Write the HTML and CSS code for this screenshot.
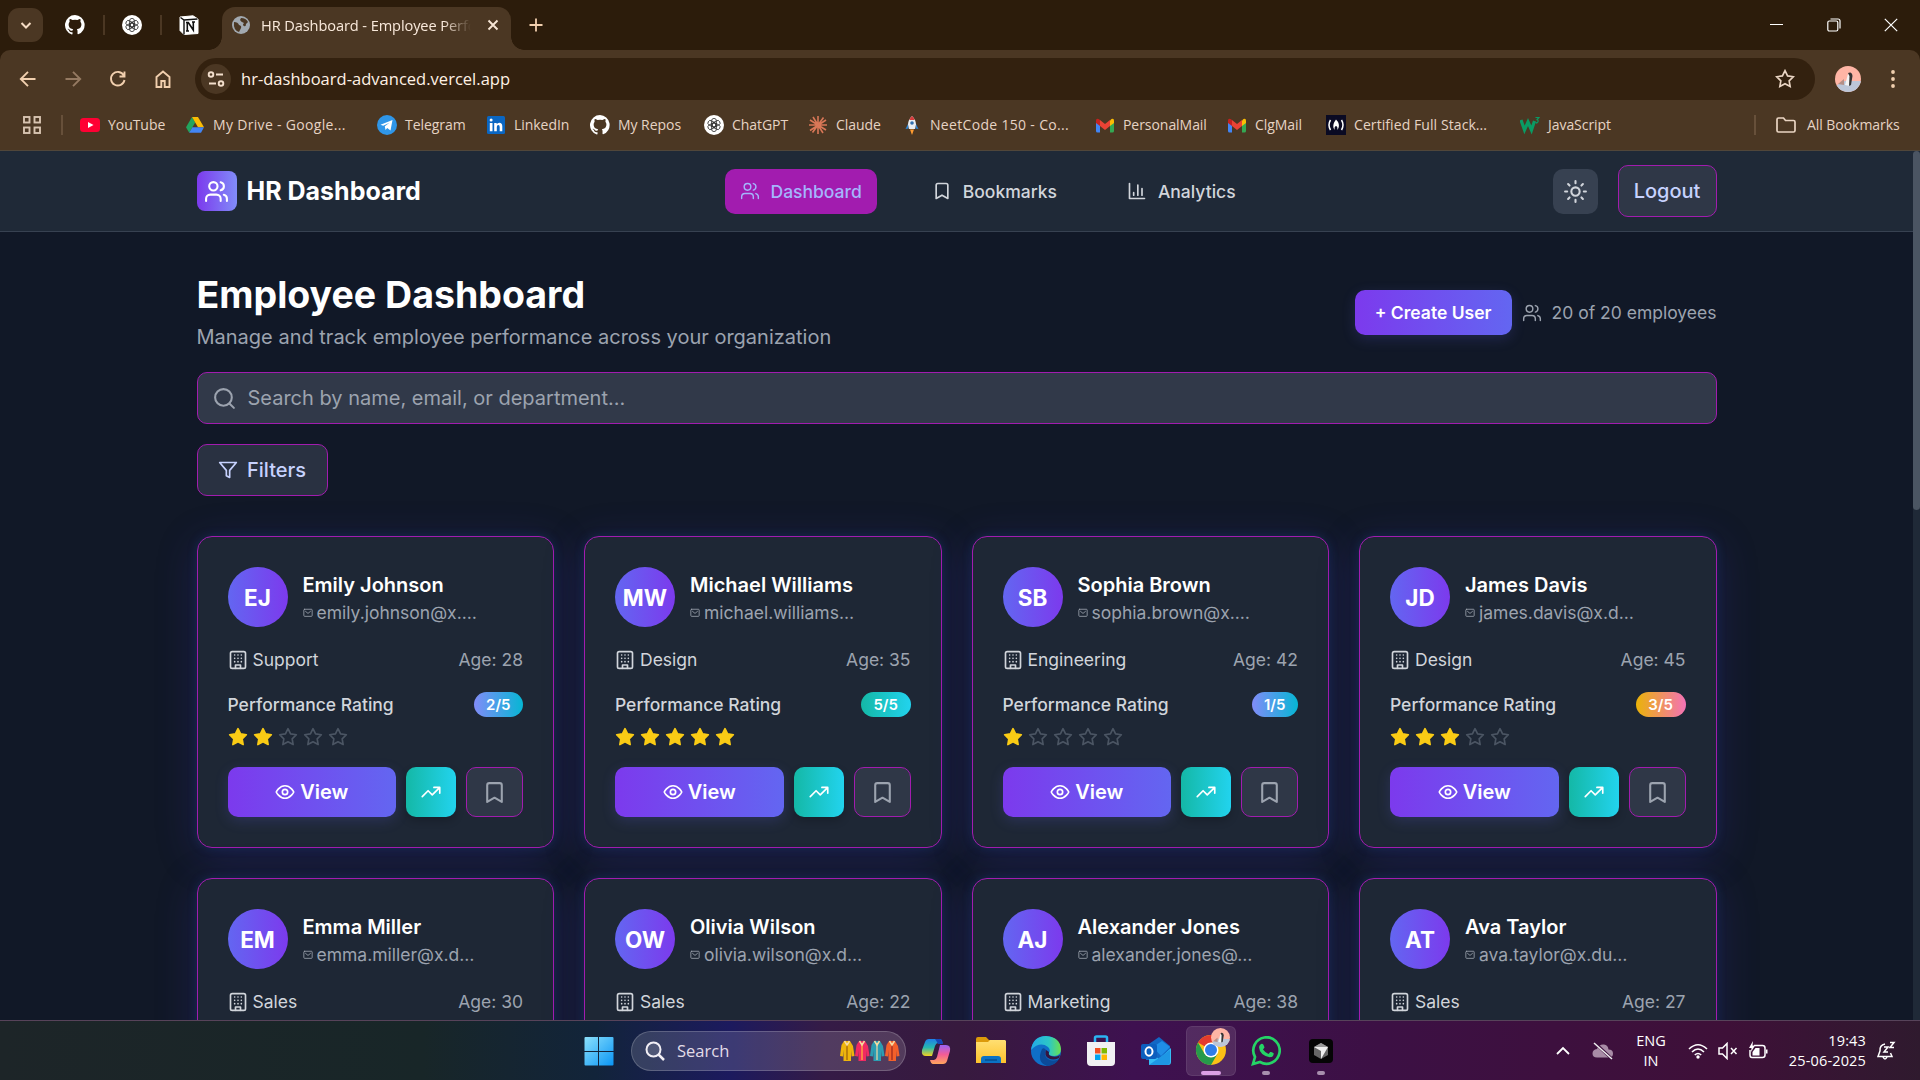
FILE: index.html
```html
<!DOCTYPE html>
<html lang="en">
<head>
<meta charset="utf-8">
<title>HR Dashboard - Employee Performance</title>
<link rel="stylesheet" href="styles.css">
</head>
<body>
<svg class="sprite" aria-hidden="true">
  <symbol id="users" viewBox="0 0 24 24"><path d="M16 21v-2a4 4 0 0 0-4-4H6a4 4 0 0 0-4 4v2M16 3.1a4 4 0 0 1 0 7.8M22 21v-2a4 4 0 0 0-3-3.9"/><circle cx="9" cy="7" r="4"/></symbol>
  <symbol id="bookmark" viewBox="0 0 24 24"><path d="m19 21-7-4-7 4V5a2 2 0 0 1 2-2h10a2 2 0 0 1 2 2z"/></symbol>
  <symbol id="chart" viewBox="0 0 24 24"><path d="M3 3v18h18M18 17V9M13 17V5M8 17v-3"/></symbol>
  <symbol id="sun" viewBox="0 0 24 24"><circle cx="12" cy="12" r="4"/><path d="M12 2v2M12 20v2M4.9 4.9l1.4 1.4M17.7 17.7l1.4 1.4M2 12h2M20 12h2M6.3 17.7l-1.4 1.4M19.1 4.9l-1.4 1.4"/></symbol>
  <symbol id="search" viewBox="0 0 24 24"><circle cx="11" cy="11" r="8"/><path d="m21 21-4.3-4.3"/></symbol>
  <symbol id="filter" viewBox="0 0 24 24"><path d="M22 3H2l8 9.46V19l4 2v-8.54z"/></symbol>
  <symbol id="mail" viewBox="0 0 24 24"><rect x="2" y="3" width="20" height="17" rx="2"/><path d="m6 8 6 5 6-5"/></symbol>
  <symbol id="building" viewBox="0 0 24 24"><rect x="3" y="2" width="18" height="20" rx="2"/><path d="M9 22v-4h6v4M8 6h.01M16 6h.01M12 6h.01M12 10h.01M12 14h.01M16 10h.01M16 14h.01M8 10h.01M8 14h.01"/></symbol>
  <symbol id="star" viewBox="0 0 24 24"><path d="m12 2 3.09 6.26L22 9.27l-5 4.87 1.18 6.88L12 17.77l-6.18 3.25L7 14.14 2 9.27l6.91-1.01z"/></symbol>
  <symbol id="eye" viewBox="0 0 24 24"><path d="M1.5 12S5 4.5 12 4.5 22.5 12 22.5 12 19 19.5 12 19.5 1.5 12 1.5 12z"/><circle cx="12" cy="12" r="3.2"/></symbol>
  <symbol id="trend" viewBox="0 0 24 24"><path d="m22 7-8.500 8.500-5-5L1.500 17.500M15.500 6.500H22.500V13.500"/></symbol>
  <symbol id="github" viewBox="0 0 16 16"><path fill="#fff" d="M8 0a8 8 0 0 0-2.530 15.590c.4.070.550-.170.550-.380V13.720c-2.220.480-2.690-1.070-2.690-1.070-.360-.920-.890-1.170-.890-1.170-.730-.5.050-.490.050-.490.810.060 1.230.830 1.230.830.720 1.230 1.880.870 2.330.670.070-.520.280-.880.510-1.080-1.780-.2-3.640-.890-3.640-3.950 0-.880.310-1.590.820-2.150-.080-.2-.360-1.020.080-2.120 0 0 .670-.210 2.200.820a7.600 7.600 0 0 1 4 0c1.530-1.040 2.200-.820 2.200-.820.440 1.100.160 1.920.080 2.120.510.560.820 1.270.820 2.150 0 3.070-1.870 3.750-3.650 3.950.290.250.540.730.540 1.480v2.200c0 .210.150.460.550.380A8 8 0 0 0 8 0z"/></symbol>
  <symbol id="gpt" viewBox="0 0 20 20"><circle cx="10" cy="10" r="10" fill="#fff"/><g fill="none" stroke="#333" stroke-width=".85"><rect x="7.600" y="3.400" width="4.800" height="8.600" rx="2.400"/><rect x="7.600" y="3.400" width="4.800" height="8.600" rx="2.400" transform="rotate(60 10 10)"/><rect x="7.600" y="3.400" width="4.800" height="8.600" rx="2.400" transform="rotate(120 10 10)"/><rect x="7.600" y="3.400" width="4.800" height="8.600" rx="2.400" transform="rotate(180 10 10)"/><rect x="7.600" y="3.400" width="4.800" height="8.600" rx="2.400" transform="rotate(240 10 10)"/><rect x="7.600" y="3.400" width="4.800" height="8.600" rx="2.400" transform="rotate(300 10 10)"/></g></symbol>
  <symbol id="gmail" viewBox="0 0 20 20"><path fill="#4285f4" d="M1 6v10q0 1.500 1.500 1.500H5V8z"/><path fill="#34a853" d="M19 6v10q0 1.500-1.500 1.500H15V8z"/><path fill="#fbbc04" d="M15 5.500 16.500 4Q19 3 19 5.500V8l-4 3z"/><path fill="#c5221f" d="M1 5.500Q1 3 3.500 4L5 5v6L1 8z"/><path fill="#ea4335" d="m5 5 5 4 5-4v6l-5 4-5-4z"/></symbol>
  <symbol id="avatar" viewBox="0 0 26 26"><clipPath id="avc"><circle cx="13" cy="13" r="13"/></clipPath><g clip-path="url(#avc)"><path fill="#ffb5a5" d="M0 0h26v26H0z"/><path fill="#bcc6d8" d="M0 20 10 15h16v11H0z"/><path fill="#b58f86" d="m3 18 6-5v6z"/><path fill="#f4f4f4" d="m13 8-3 11 5 1 1-10z"/><path fill="#333" d="M13 7q4-2 4.500 3l-1.500 9-2 1 .5-10z"/></g></symbol>
</svg>

<div class="screen">
  <header class="browser">
    <div class="tabstrip">
      <button class="tab-menu"><svg width="14" height="14" viewBox="0 0 14 14"><path d="m2.500 5 4.500 4.500L11.500 5" fill="none" stroke="#f5dcc4" stroke-width="2"/></svg></button>
      <span class="pinned"><svg width="20" height="20"><use href="#github"/></svg></span>
      <span class="pin-sep"></span>
      <span class="pinned"><svg width="20" height="20"><use href="#gpt"/></svg></span>
      <span class="pin-sep"></span>
      <span class="pinned"><svg width="20" height="20" viewBox="0 0 20 20"><path d="M1 2 14 .8 19 4v14.500L5 19.500l-4-4z" fill="#fff" stroke="#fff"/><path d="M5 5v14.500M1.500 2.500 5 5l13.500-1" stroke="#111" stroke-width="1.400" fill="none"/><path d="M8.300 16V7.500h1l5 7.500V7M7 7.500h2.500M7 16h3M13 7h3" stroke="#111" stroke-width="1.600" fill="none"/></svg></span>
      <div class="tab">
        <svg width="18" height="18" viewBox="0 0 18 18"><circle cx="9" cy="9" r="9" fill="#a2a9b0"/><path d="M2 6q4 0 5 3 3 1 2 3-1 2-2 4Q1 14 2 6zM9 2q5 0 7 4l-2 2q0 3-2 2t0-3q-3-1-4-3z" fill="#4b3723"/></svg>
        <span class="tab-title">HR Dashboard - Employee Perfo</span>
        <svg width="12" height="12" viewBox="0 0 12 12"><path d="m1.500 1.500 9 9m0-9-9 9" stroke="#f7e6d6" stroke-width="1.900"/></svg>
      </div>
      <svg class="new-tab" width="14" height="14" viewBox="0 0 14 14"><path d="M7 .5v13M.5 7h13" stroke="#f1cfae" stroke-width="1.800"/></svg>
      <div class="window-buttons">
        <svg width="14" height="14" viewBox="0 0 14 14"><path d="M0 6.500h13" stroke="#fff"/></svg>
        <svg width="14" height="14" viewBox="0 0 14 14"><g fill="none" stroke="#fff" stroke-width="1.200"><rect x=".8" y="3" width="10" height="10" rx="1.500"/><path d="M3.500 1h7.500a2 2 0 0 1 2 2v7.500"/></g></svg>
        <svg width="14" height="14" viewBox="0 0 14 14"><path d="m.8.8 12.400 12.400m0-12.400L.8 13.200" stroke="#fff" stroke-width="1.200"/></svg>
      </div>
    </div>
    <div class="toolbar">
      <div class="nav-icons">
        <svg width="20" height="20" viewBox="0 0 20 20"><path d="M17.500 10H3M10 2.800 2.800 10l7.200 7.200"/></svg>
        <svg class="dim" width="20" height="20" viewBox="0 0 20 20"><path d="M2.500 10H17M10 2.800l7.200 7.200-7.200 7.200"/></svg>
        <svg width="20" height="20" viewBox="0 0 20 20"><path d="M15.800 6.500A6.800 6.800 0 1 0 16.500 11M16.500 2.500v5h-5"/></svg>
        <svg width="20" height="20" viewBox="0 0 20 20"><path d="M3.500 18V8L10 2.500 16.500 8v10h-4.800v-6H8.300v6z"/></svg>
      </div>
      <div class="omnibox">
        <span class="site-info"><svg width="18" height="18" viewBox="0 0 18 18"><g fill="none" stroke="#f3dfcd" stroke-width="1.900"><circle cx="4" cy="4.500" r="2.300"/><path d="M9 4.500h7M2 13.500h7"/><circle cx="14" cy="13.500" r="2.300"/></g></svg></span>
        <span class="url">hr-dashboard-advanced.vercel.app</span>
        <svg width="20" height="20" viewBox="0 0 24 24"><use href="#star" fill="none" stroke="#ead5c3" stroke-width="2"/></svg>
      </div>
      <svg class="profile" width="26" height="26"><use href="#avatar"/></svg>
      <svg class="more" width="6" height="20" viewBox="0 0 6 20"><g fill="#f1cfae"><circle cx="3" cy="3" r="1.900"/><circle cx="3" cy="10" r="1.900"/><circle cx="3" cy="17" r="1.900"/></g></svg>
    </div>
    <div class="bookmarks">
      <svg class="apps" width="18" height="18" viewBox="0 0 18 18"><g fill="none" stroke="#d8c4b1" stroke-width="1.900"><rect x="1" y="1" width="5.500" height="5.500"/><rect x="11.500" y="1" width="5.500" height="5.500"/><rect x="1" y="11.500" width="5.500" height="5.500"/><rect x="11.500" y="11.500" width="5.500" height="5.500"/></g></svg>
      <span class="bar-sep"></span>
      <div class="bookmark-list">
        <span class="bm"><svg width="20" height="20" viewBox="0 0 20 20"><rect y="3" width="20" height="14" rx="3.500" fill="#ff0033"/><path d="m8 7 5.500 3L8 13z" fill="#fff"/></svg><b>YouTube</b></span>
        <span class="bm long"><svg width="20" height="20" viewBox="0 0 20 20"><path d="m7 2 3.200 5.400L4.200 17.800 1 12.300z" fill="#22a45d"/><path d="M7 2h6l6 10.300h-6z" fill="#fbbc04"/><path d="M4.200 17.800 7.400 12.300H19l-3 5.500z" fill="#4285f4"/></svg><b>My Drive - Google...</b></span>
        <span class="bm"><svg width="20" height="20" viewBox="0 0 20 20"><circle cx="10" cy="10" r="10" fill="#2f96e8"/><path d="m3.500 9.700 12-4.800-2 10.500-3.300-2.400L8.500 15l-.7-3.800 4.700-3.500-6.300 3z" fill="#fff"/></svg><b>Telegram</b></span>
        <span class="bm"><svg width="20" height="20" viewBox="0 0 20 20"><rect x="1" y="1" width="18" height="18" rx="1.500" fill="#0a66c2"/><path d="M3.800 8h2.700v8.200H3.800zM8.200 8h2.500v1.200q.8-1.500 2.600-1.500 3 0 3 3.700v4.800h-2.600v-4.300q0-1.900-1.400-1.900-1.500 0-1.500 2v4.200H8.200z" fill="#fff"/><circle cx="5.100" cy="5.100" r="1.500" fill="#fff"/></svg><b>LinkedIn</b></span>
        <span class="bm"><svg width="20" height="20"><use href="#github"/></svg><b>My Repos</b></span>
        <span class="bm"><svg width="20" height="20"><use href="#gpt"/></svg><b>ChatGPT</b></span>
        <span class="bm"><svg width="20" height="20" viewBox="0 0 20 20"><path d="M10 1v18M1 10h18M5 2l10 16M15.500 2.500l-11 15M2 5l16 10M2 15.500 18 5" stroke="#d97757" stroke-width="1.600"/></svg><b>Claude</b></span>
        <span class="bm long"><svg width="20" height="20" viewBox="0 0 20 20"><path d="M6 9 3.500 14l3-.5zM14 9l2.500 5-3-.5z" fill="#2f87d8"/><path d="M10 1q-4 4-4 8.500L7 14h6l1-4.500Q14 5 10 1z" fill="#e8edf2"/><path d="M10 1Q8 3 7.300 5h5.400Q12 3 10 1z" fill="#d83b3b"/><circle cx="10" cy="8" r="1.800" fill="#2f6fae"/><path d="M8 14.500h4L10 20z" fill="#ff9b2f"/></svg><b>NeetCode 150 - Co...</b></span>
        <span class="bm"><svg width="20" height="20"><use href="#gmail"/></svg><b>PersonalMail</b></span>
        <span class="bm"><svg width="20" height="20"><use href="#gmail"/></svg><b>ClgMail</b></span>
        <span class="bm cert"><svg width="20" height="20" viewBox="0 0 20 20"><path fill="#0a0a23" d="M0 0h20v20H0z"/><path d="M4.500 5q-3 5 0 10M15.500 5q3 5 0 10" fill="none" stroke="#fff" stroke-width="1.500"/><path d="M10 4.500q4 4 2.500 8.500l-1.300 2Q12 11.500 10 11q-2 .5-1.200 4L7.500 13Q6.500 9 10 4.500z" fill="#fff"/></svg><b>Certified Full Stack...</b></span>
        <span class="bm"><svg width="20" height="20" viewBox="0 0 20 20"><path d="m1 5 3.500 10L8 7l3.500 8L14.500 6" fill="none" stroke="#0a9b64" stroke-width="3.200"/><path d="M15.500 2.500H19l-2 2.300q2.500 1-.2 3.200l-1.300-.6" fill="none" stroke="#0a9b64" stroke-width="1.200"/></svg><b>JavaScript</b></span>
      </div>
      <span class="bar-sep"></span>
      <span class="bm all"><svg width="20" height="20" viewBox="0 0 20 20"><path d="M1 4.500Q1 3 2.500 3H7.500l2 2.500h8Q19 5.500 19 7v8.500q0 1.500-1.500 1.500h-15Q1 17 1 15.500z" fill="none" stroke="#ead5c3" stroke-width="1.700"/></svg><b>All Bookmarks</b></span>
    </div>
  </header>

  <div class="viewport">
    <div class="page">
      <div class="app-header">
        <div class="wrap app-bar">
          <div class="brand"><span class="brand-mark"><svg class="ico" width="25" height="25"><use href="#users"/></svg></span><span class="brand-name">HR Dashboard</span></div>
          <nav class="main-nav">
            <a class="active"><svg class="ico thin" width="20" height="20"><use href="#users"/></svg>Dashboard</a>
            <a><svg class="ico" width="20" height="20"><use href="#bookmark"/></svg>Bookmarks</a>
            <a><svg class="ico" width="20" height="20"><use href="#chart"/></svg>Analytics</a>
          </nav>
          <div class="account"><button class="theme"><svg class="ico" width="25" height="25"><use href="#sun"/></svg></button><button class="outline-btn logout">Logout</button></div>
        </div>
      </div>
      <main class="wrap">
        <div class="page-head">
          <div><h1>Employee Dashboard</h1><p>Manage and track employee performance across your organization</p></div>
          <div class="page-actions"><button class="create">+ Create User</button><span class="count"><svg class="ico thin" width="20" height="20"><use href="#users"/></svg>20 of 20 employees</span></div>
        </div>
        <div class="search"><svg class="ico" width="25" height="25"><use href="#search"/></svg>Search by name, email, or department...</div>
        <button class="outline-btn filters"><svg class="ico" width="20" height="20"><use href="#filter"/></svg>Filters</button>
        <div class="cards" id="cards"></div>
      </main>
    </div>
    <div class="scrollbar"><span></span></div>
  </div>

  <footer class="taskbar">
    <div class="task-center">
      <span class="slot"><svg width="30" height="30" viewBox="0 0 30 30"><defs><linearGradient id="wg" x2="1" y2="1"><stop stop-color="#8be0fb"/><stop offset="1" stop-color="#0a95f5"/></linearGradient></defs><path fill="url(#wg)" d="M.5 2q0-1 1-1H14v14H.5zM15 1h13.500q1 0 1 1v13H15zM.5 16H14v13.500H1.500q-1 0-1-1zM15 16h14.500v12.500q0 1-1 1H15z"/></svg></span>
      <div class="task-search">
        <svg width="20" height="20" viewBox="0 0 20 20"><circle cx="8.500" cy="8.500" r="7" fill="#fff2" stroke="#f2eff5" stroke-width="2"/><path d="m13.500 13.500 5.500 5.500" stroke="#f2eff5" stroke-width="2.500"/></svg>
        <span>Search</span>
        <svg width="60" height="22" viewBox="0 0 60 22"><path fill="#eeb50c" d="M4 1h6l3 5 1.500 10-3 .5L11 10v11H3.500V10L3 16.500 0 16 1.500 5z"/><path fill="#f02a62" d="M19 1h6l3 5 1.500 10-3 .5L26 10v11h-7.500V10l-.5 6.500-3-.5L16.500 5z"/><path fill="#2c9db2" d="M34 1h6l3 5 1.500 10-3 .5L41 10v11h-7.500V10l-.5 6.500-3-.5L31.500 5z"/><path fill="#f2602a" d="M49 1h6l3 5 1.500 10-3 .5L56 10v11h-7.500V10l-.5 6.500-3-.5L46.500 5z"/><g stroke-width="1.300"><path d="M7 3v17" stroke="#a2660a"/><path d="M22 3v17" stroke="#ffb33c"/><path d="M37 3v17" stroke="#e5d3a2"/><path d="M52 3v17" stroke="#9c2a1f"/></g><g fill="none" stroke="#f5d9a0" stroke-width="1.500"><path d="m4.500 1 2.500 4 2.500-4M19.500 1 22 5l2.500-4M34.500 1 37 5l2.500-4M49.500 1 52 5l2.500-4"/></g></svg>
      </div>
      <span class="slot"><svg width="30" height="28" viewBox="0 0 30 28"><defs><linearGradient id="cp1" x2="0" y2="1"><stop stop-color="#1f7fe8"/><stop offset=".5" stop-color="#27b8b0"/><stop offset="1" stop-color="#f5d21f"/></linearGradient><linearGradient id="cp2" x2="0" y2="1"><stop stop-color="#9a63f5"/><stop offset=".5" stop-color="#f45c96"/><stop offset="1" stop-color="#ffa65c"/></linearGradient></defs><path fill="url(#cp1)" d="M8 2h11q2 0 2.500 4H17q-2 0-3 3l-3 10H5q-5 0-4-6L4 5q1-3 4-3z"/><path fill="#1547b8" d="M14 2h5q2 0 3 5h-5q-2-4-3-5z"/><path fill="url(#cp2)" d="M22 27H12q-2 0-3-4h4q2 0 3-3l3-12h6q5 0 4 6l-3 10q-1 3-4 3z"/></svg></span>
      <span class="slot"><svg width="30" height="28" viewBox="0 0 30 28"><path d="M0 2q0-2 2-2h8l3 3h15v8H0z" fill="#dc9a0a"/><defs><linearGradient id="fg" x2="0" y2="1"><stop stop-color="#ffdf72"/><stop offset="1" stop-color="#fdc22b"/></linearGradient></defs><path d="M0 5h12l2-2h15l1 1v22H0z" fill="url(#fg)"/><path d="M5 26v-4q0-3 3-3h14q3 0 3 3v4z" fill="#0b72c4"/><path d="M9 23h12" stroke="#064f91" stroke-width="1.500"/></svg></span>
      <span class="slot"><svg width="30" height="30" viewBox="0 0 30 30"><defs><linearGradient id="eg"><stop stop-color="#23a9e8"/><stop offset=".6" stop-color="#2cc7c6"/><stop offset="1" stop-color="#6be04e"/></linearGradient></defs><circle cx="15" cy="15" r="15" fill="#0f6fc8"/><path d="M0 14Q2 0 15 0q14 1 15 13 0 7-7 7-6 0-5-3 2-3-1-6Q9 5 0 14z" fill="url(#eg)"/><path d="M11 13q-6 13 5 17 8 0 12-7-6 3-11 0-5-4-2-9-2-3-4-1z" fill="#0b4a98"/><path d="M15 14q-2 5 2 8 5 3 11 0l1-3q-4 3-9 1-3-1-2-4z" fill="#35153f"/></svg></span>
      <span class="slot"><svg width="30" height="32" viewBox="0 0 30 32"><path d="M9 9V3q0-1.500 1.500-1.500h9Q21 1.500 21 3v6" fill="none" stroke="#2bb4f2" stroke-width="2.500"/><path d="M1 7h28v20q0 4-4 4H5q-4 0-4-4z" fill="#f1f1f3"/><path fill="#f25022" d="M9 13h5.500v5.500H9z"/><path fill="#7fba00" d="M15.500 13H21v5.500h-5.500z"/><path fill="#00a4ef" d="M9 19.500h5.500V25H9z"/><path fill="#ffb900" d="M15.500 19.500H21V25h-5.500z"/></svg></span>
      <span class="slot"><svg width="30" height="30" viewBox="0 0 30 30"><path d="m5 10 13-9 11 9v14H5z" fill="#1267c4"/><path d="m12 11 9-6 8 6-9 9z" fill="#1f8ee6"/><path d="M8 29V16l10 7 12-11v14q0 3-3 3z" fill="#35bdf4"/><path d="m8 29 21-15v12q0 3-3 3z" fill="#1e97e4"/><rect y="8" width="16" height="15" rx="2" fill="#0c5fbe"/><ellipse cx="8" cy="15.500" rx="3.500" ry="4.200" fill="none" stroke="#fff" stroke-width="2"/></svg></span>
      <span class="slot current"><svg width="38" height="42" viewBox="0 0 38 42"><g transform="translate(4 9)"><circle cx="15" cy="15" r="15" fill="#fbc116"/><path d="M15 15 2 7.500A15 15 0 0 1 28 7.500H15z" fill="#e33b2e"/><path d="M2 7.500A15 15 0 0 0 15 30l6.500-11.200L15 15 8.500 18.700z" fill="#269a4b"/><circle cx="15" cy="15" r="7.500" fill="#fff"/><circle cx="15" cy="15" r="6" fill="#2f7de9"/></g><svg x="19" y="2" width="19" height="19"><use href="#avatar"/></svg></svg></span>
      <span class="slot open"><svg width="30" height="30" viewBox="0 0 30 30"><path d="M2 28 4 21A13.200 13.200 0 1 1 9 26z" fill="none" stroke="#25d366" stroke-width="2.700"/><path d="M10 8q2-1 3 2l.5 1.500-1.500 2q2 3 5.500 4.500l1.700-2q1-.5 3.500 1.300 0 4-4 4-10-2-10.700-10 0-2 2-3.300z" fill="#25d366"/></svg></span>
      <span class="slot open"><svg width="24" height="24" viewBox="0 0 24 24"><rect width="24" height="24" rx="4" fill="#050505"/><path d="m12 4 7 4v8l-7 4-7-4V8z" fill="#666"/><path d="m12 4 7 4H5z" fill="#999"/><path d="M5 8h14l-7 12v-8z" fill="#eee"/></svg></span>
    </div>
    <div class="tray">
      <svg width="14" height="14" viewBox="0 0 14 14"><path d="m1 10 6-6 6 6" fill="none" stroke="#fff" stroke-width="1.800"/></svg>
      <svg width="22" height="18" viewBox="0 0 22 18"><path d="M5 15.500q-4.500 0-4.500-4T5 7q2-5 7-4.500 4 .5 4.500 5 4.500 0 4.500 4t-4 4z" fill="#a88ca6"/><path d="m3 1 17 16" stroke="#3f113f" stroke-width="3"/><path d="m2 1 18 16" stroke="#eee" stroke-width="1.500"/></svg>
      <span class="lang">ENG<br>IN</span>
      <svg width="20" height="20" viewBox="0 0 20 20"><g fill="none" stroke="#fff" stroke-width="1.600"><path d="M1 8q9-8.500 18 0M4 11q6-6 12 0M6.800 14q3.200-3 6.400 0"/></g><circle cx="10" cy="16" r="1.700" fill="#fff"/></svg>
      <svg width="20" height="18" viewBox="0 0 20 18"><path d="M1 6h3.500L9 1.500v15L4.500 12H1zM13 6l5.500 6M18.500 6 13 12" fill="none" stroke="#fff" stroke-width="1.500"/></svg>
      <svg width="20" height="20" viewBox="0 0 20 20"><path d="M6 4.500h8.500q2.500 0 2.500 2.500v7q0 2.500-2.500 2.500H4Q2 16.500 2 14V9" fill="none" stroke="#fff" stroke-width="1.500"/><path d="M18 8.500h1.500v4H18zM7.500 7h4v7.500h-7V11z" fill="#fff"/><path d="M5 0 1 7h2.500L3 11l4-6.500H4.500z" fill="#fff"/></svg>
      <span class="clock">19:43<br>25-06-2025</span>
      <svg width="20" height="20" viewBox="0 0 20 20"><path d="M9 3Q3.500 4 4 10L2 15.500h14L14.500 12M7 16q2 4 4 0" fill="none" stroke="#fff" stroke-width="1.500"/><path d="M8 6h4l-4 5h4M14 1.500h4l-4 5h4" fill="none" stroke="#fff" stroke-width="1.500"/></svg>
    </div>
  </footer>
</div>
<script src="cards.js"></script>
</body>
</html>
```

FILE: cards.js
```js
const employees = [
  { name: 'Emily Johnson', email: 'emily.johnson@x.…', dept: 'Support', age: 28, rating: 2 },
  { name: 'Michael Williams', email: 'michael.williams…', dept: 'Design', age: 35, rating: 5 },
  { name: 'Sophia Brown', email: 'sophia.brown@x.…', dept: 'Engineering', age: 42, rating: 1 },
  { name: 'James Davis', email: 'james.davis@x.d…', dept: 'Design', age: 45, rating: 3 },
  { name: 'Emma Miller', email: 'emma.miller@x.d…', dept: 'Sales', age: 30 },
  { name: 'Olivia Wilson', email: 'olivia.wilson@x.d…', dept: 'Sales', age: 22 },
  { name: 'Alexander Jones', email: 'alexander.jones@…', dept: 'Marketing', age: 38 },
  { name: 'Ava Taylor', email: 'ava.taylor@x.du…', dept: 'Sales', age: 27 }
];

const icon = (id, size, cls = '') =>
  `<svg class="ico ${cls}" width="${size}" height="${size}"><use href="#${id}"/></svg>`;

const tone = rating => (rating > 3 ? 'high' : rating === 3 ? 'mid' : 'low');

const details = e => `
  <div class="row rating"><span>Performance Rating</span><span class="badge ${tone(e.rating)}">${e.rating}/5</span></div>
  <div class="stars">${[1, 2, 3, 4, 5].map(n => icon('star', 20, n <= e.rating ? 'on' : 'off')).join('')}</div>
  <div class="actions">
    <button class="view">${icon('eye', 20)}View</button>
    <button class="promote">${icon('trend', 20)}</button>
    <button class="outline-btn save">${icon('bookmark', 25)}</button>
  </div>`;

document.getElementById('cards').innerHTML = employees.map(e => `
  <article class="card">
    <div class="person">
      <span class="initials">${e.name.split(' ').map(w => w[0]).join('')}</span>
      <div><h2>${e.name}</h2><p>${icon('mail', 10)}${e.email}</p></div>
    </div>
    <div class="row"><span class="dept">${icon('building', 20)}${e.dept}</span><span class="age">Age: ${e.age}</span></div>
    ${e.rating ? details(e) : ''}
  </article>`).join('');
```

FILE: styles.css
```css
* { box-sizing: border-box; margin: 0; }
body { background: #111827; overflow: hidden; }
button { font: inherit; color: inherit; border: 0; padding: 0; }
svg { display: block; flex: none; }
.sprite { position: absolute; width: 0; height: 0; }
.ico { fill: none; stroke: currentColor; stroke-width: 2; stroke-linecap: round; stroke-linejoin: round; }
.ico.thin { stroke-width: 1.7; }

.screen { width: 1920px; height: 1080px; display: flex; flex-direction: column; overflow: hidden; }

/* Browser frame */
.browser { height: 151px; flex: none; background: #2c1c0b; border-bottom: 1px solid #50463a; font-family: "Open Sans", "Noto Sans", sans-serif; color: #e6d3c3; }
.tabstrip { height: 50px; display: flex; align-items: center; padding-left: 8px; }
.tab-menu { width: 35px; height: 34px; border-radius: 11px; background: #4b3723; display: grid; place-items: center; margin-right: 22px; }
.pinned { width: 20px; }
.pin-sep { width: 2px; height: 20px; background: #4b3723; margin: 0 17.5px; }
.tab { position: relative; width: 289px; height: 43px; align-self: flex-end; margin-left: 23px; padding: 0 14px 7px 10px; display: flex; align-items: center; border-radius: 13px 13px 0 0; background: #4b3723; }
.tab::before, .tab::after { content: ""; position: absolute; bottom: 0; width: 13px; height: 13px; }
.tab::before { left: -13px; background: radial-gradient(circle at 0 0, transparent 12.5px, #4b3723 13px); }
.tab::after { right: -13px; background: radial-gradient(circle at 100% 0, transparent 12.5px, #4b3723 13px); }
.tab-title { width: 212px; margin: 0 14px 0 11px; white-space: nowrap; font-size: 14.600px; letter-spacing: -.1px; color: #f9e9db; -webkit-mask-image: linear-gradient(90deg, #000 86%, transparent 99%); mask-image: linear-gradient(90deg, #000 86%, transparent 99%); }
.new-tab { margin-left: 18px; }
.window-buttons { margin-left: auto; margin-right: 22px; display: flex; gap: 43px; }
.toolbar { height: 58px; display: flex; align-items: center; background: #4b3723; border-radius: 10px 10px 0 0; }
.nav-icons { display: flex; gap: 25px; margin-left: 18px; width: 177px; }
.nav-icons path { fill: none; stroke: #f1cfae; stroke-width: 1.900; }
.nav-icons .dim path { stroke: #957a62; }
.omnibox { width: 1620px; height: 42px; border-radius: 21px; background: #33210f; display: flex; align-items: center; padding: 0 20px 0 6px; }
.site-info { width: 30px; height: 30px; border-radius: 50%; background: #4b3723; display: grid; place-items: center; }
.url { margin: 0 auto 1px 10px; font-size: 16.5px; letter-spacing: .02px; color: #fff1e5; }
.profile { margin-left: 20px; }
.more { margin-left: 29px; }
.bookmarks { height: 42px; display: flex; align-items: center; padding: 0 0 8px 23px; background: #4b3723; }
.bar-sep { width: 2px; height: 20px; background: #67503a; margin-left: 20px; flex: none; }
.bookmark-list { width: 1674px; margin-left: 17px; display: grid; grid-template-columns: 105px 192px 109px 104px 114px 104px 94px 193px 132px 99px 194px 1fr; }
.bookmark-list + .bar-sep { margin-left: 0; }
.bm { display: flex; align-items: center; gap: 8px; white-space: nowrap; font-size: 14px; }
.bm b { font-weight: 400; letter-spacing: -.05px; margin-top: -2px; }
.bm.long b { letter-spacing: .32px; }
.bm.cert b { letter-spacing: .08px; }
.bm.all { margin-left: 20px; gap: 11px; }

/* Application */
.viewport { height: 869px; flex: none; display: flex; overflow: hidden; font-family: Inter, sans-serif; color: #fff; }
.page { width: 1913px; height: 869px; overflow: hidden; background: #111827; }
.scrollbar { width: 7px; background: #1f2937; }
.scrollbar span { display: block; height: 359px; border-radius: 4px; background: #4b5563; }
.wrap { width: 1520px; margin: 0 auto; position: relative; }
.app-header { height: 81px; background: #1f2937; border-bottom: 1px solid #374151; }
.app-bar { height: 80px; display: grid; grid-template-columns: 528px 1fr auto; align-items: center; }
.brand { display: flex; align-items: center; gap: 10px; }
.brand-mark { width: 40px; height: 40px; border-radius: 8px; background: linear-gradient(90deg, #7c3aed, #818cf8); display: grid; place-items: center; }
.brand-name { font-size: 25px; font-weight: 700; }
.main-nav { display: flex; gap: 40px; }
.main-nav a { height: 45px; padding: 0 15px; display: flex; align-items: center; gap: 11px; border-radius: 10px; font-size: 17.5px; font-weight: 500; color: #d1d5db; }
.main-nav .active { background: #a21caf; color: #a5b4fc; }
.account { display: flex; align-items: center; gap: 20px; }
.theme { width: 45px; height: 45px; border-radius: 10px; background: #374151; color: #d1d5db; display: grid; place-items: center; }
.outline-btn { border: 1px solid #a21caf; border-radius: 10px; background: #2f3747; color: #c7d2fe; font-size: 20px; font-weight: 500; }
.logout { width: 99px; height: 52px; }
.page-head { display: flex; justify-content: space-between; align-items: center; margin-top: 40px; height: 80px; }
h1 { font-size: 37.5px; line-height: 45px; font-weight: 700; }
.page-head p { margin-top: 5px; font-size: 20px; line-height: 30px; color: #9ca3af; }
.page-actions { display: flex; align-items: center; gap: 10px; padding-top: 1px; }
.create { width: 157px; height: 45px; border-radius: 10px; background: linear-gradient(90deg, #7c3aed, #6366f1); box-shadow: 0 4px 14px #6366f130; font-size: 17.5px; font-weight: 600; }
.count { display: flex; gap: 10px; align-items: center; font-size: 17.5px; color: #9ca3af; }
.search { margin-top: 20px; height: 52px; padding-left: 14px; display: flex; align-items: center; gap: 11px; border: 1px solid #a21caf; border-radius: 10px; background: #313949; font-size: 20px; color: #9ca3af; }
.filters { margin-top: 20px; width: 131px; height: 52px; display: flex; align-items: center; justify-content: center; gap: 9px; background: #293141; }
.cards { margin-top: 40px; display: grid; grid-template-columns: repeat(4, 1fr); grid-auto-rows: 312px; gap: 30px; }
.card { padding: 30px; border: 1px solid #a21caf; border-radius: 15px; background: #1e2735; box-shadow: 0 0 10px #1e4a8059, 0 8px 40px #3730a34d; }
.person { display: flex; gap: 15px; height: 60px; }
.initials { width: 60px; height: 60px; border-radius: 50%; background: linear-gradient(90deg, #6366f1, #7c3aed); display: grid; place-items: center; font-size: 22.500px; font-weight: 700; padding-top: 1px; }
h2 { font-size: 20px; line-height: 30px; font-weight: 600; margin-top: 3px; }
.person p { display: flex; align-items: center; gap: 4px; font-size: 17.5px; line-height: 25px; color: #9ca3af; }
.row { height: 25px; margin-top: 20px; display: flex; align-items: center; justify-content: space-between; font-size: 17.5px; color: #d1d5db; }
.dept { display: flex; align-items: center; gap: 5px; }
.age { color: #9ca3af; }
.rating { font-weight: 500; }
.badge { height: 25px; padding: 0 12.500px; border-radius: 13px; font-size: 15px; line-height: 25px; font-weight: 600; color: #fff; }
.low { background: linear-gradient(90deg, #818cf8, #06b6d4); }
.mid { background: linear-gradient(90deg, #eab308, #f472b6); }
.high { background: linear-gradient(90deg, #14b8a6, #22d3ee); }
.stars { display: flex; gap: 5px; height: 20px; margin-top: 10px; }
.on { color: #facc15; fill: #facc15; }
.off { color: #4b5563; }
.actions { display: grid; grid-template-columns: 1fr 50px 57px; gap: 10px; height: 50px; margin-top: 20px; }
.actions button { display: flex; align-items: center; justify-content: center; border-radius: 10px; }
.view { gap: 5px; background: linear-gradient(90deg, #7c3aed, #6366f1); box-shadow: 0 4px 14px #6366f130; font-size: 20px; font-weight: 600; }
.promote { background: linear-gradient(90deg, #14b8a6, #22d3ee); box-shadow: 0 4px 8px #0003; }
.actions .save { color: #9ca3af; }

/* Taskbar */
.taskbar { position: relative; height: 60px; flex: none; display: flex; align-items: center; border-top: 1px solid #57435a; background: linear-gradient(90deg, #1d2528 0, #182628 22%, #12243a 31%, #1c1a5e 38%, #351b46 43%, #371a3e 50%, #3e1150 59%, #3c1044 72%, #3e1038 90%, #2f1a2e 100%); font-family: "Open Sans", "Noto Sans", sans-serif; color: #fff; }
.task-center { display: flex; align-items: center; gap: 5px; margin-left: 574px; }
.slot { position: relative; width: 50px; height: 50px; display: grid; place-items: center; }
.task-search { width: 275px; height: 40px; margin: 0 0 0 2px; border: 1px solid #ffffff30; border-radius: 20px; background: #ffffff24; display: flex; align-items: center; padding: 0 5px 0 13px; }
.task-search span { margin: 0 auto 0 12px; font-size: 16.5px; color: #e2dce8; }
.current { border-radius: 6px; background: #ffffff1c; border: 1px solid #ffffff14; }
.current > svg { margin-top: -8px; }
.current::after, .open::after { content: ""; position: absolute; bottom: 0; width: 20px; height: 4px; border-radius: 2px; background: #dc9fe6; }
.open::after { width: 8px; background: #a88fae; bottom: 1px; }
.tray { margin-left: auto; margin-right: 24px; display: flex; align-items: center; font-size: 14.500px; line-height: 20px; }
.tray .lang { width: 44px; text-align: center; margin: 0 15px 0 15px; }
.tray > svg:nth-child(1) { margin-right: 22px; }
.tray > svg:nth-child(4), .tray > svg:nth-child(5) { margin-right: 10px; }
.clock { width: 88px; text-align: right; margin: 0 10px; white-space: nowrap; letter-spacing: .15px; }
```
